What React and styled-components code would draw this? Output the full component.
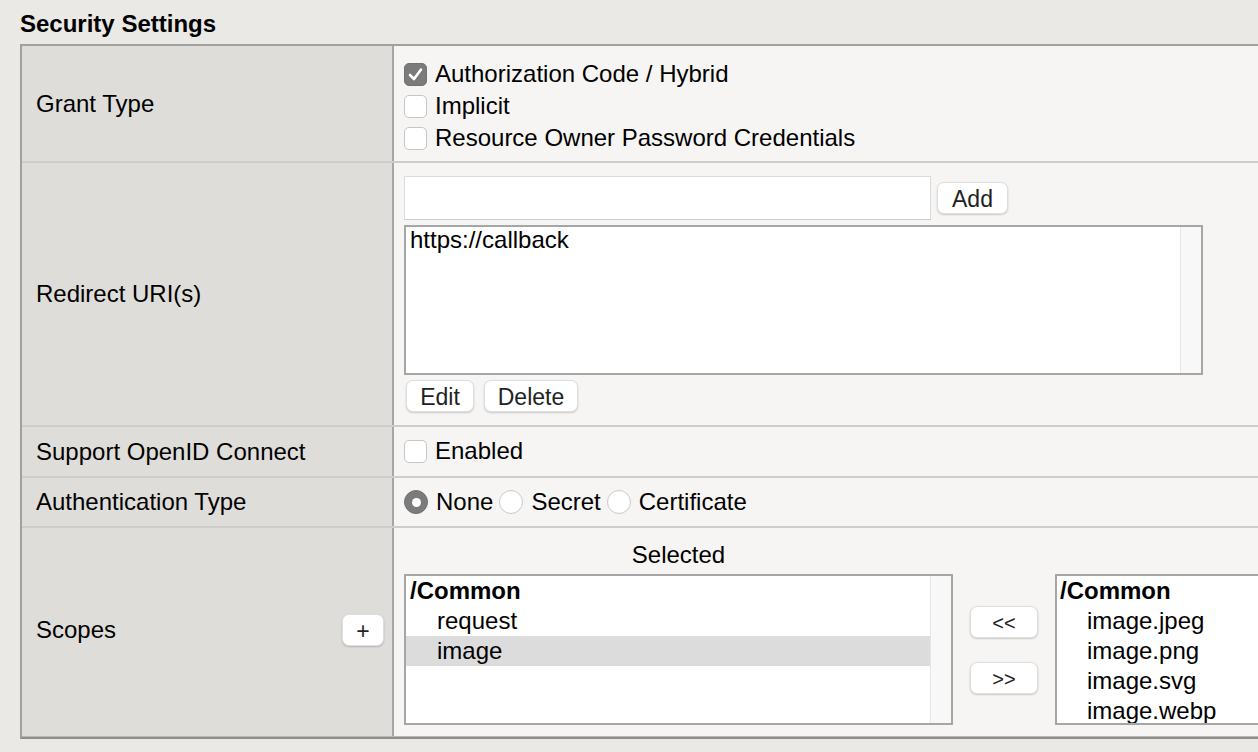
import React from "react"
import styled, { createGlobalStyle } from "styled-components"

const GlobalStyle = createGlobalStyle`
  *, *::before, *::after { box-sizing: border-box; }
  html, body {
    margin: 0;
    padding: 0;
    overflow: hidden;
    background: #ebe9e5;
  }
  body {
    font-family: "Liberation Sans", Arial, Helvetica, sans-serif;
    color: #000;
  }
`

const Check = ({ checked }) => (
  <CheckBox $checked={checked}>
    {checked && (
      <svg width="17" height="17" viewBox="0 0 17 17">
        <polyline points="3,9 7,13 14,3.5" fill="none" stroke="#fff" strokeWidth="2.6" strokeLinecap="round" strokeLinejoin="round" />
      </svg>
    )}
  </CheckBox>
)

const Option = ({ checked, children }) => (
  <OptionLine>
    <Check checked={checked} />
    <span>{children}</span>
  </OptionLine>
)

const Radio = ({ selected, children }) => (
  <RadioOption>
    <RadioDot $selected={selected} />
    <span>{children}</span>
  </RadioOption>
)

export default function App() {
  return (
    <Page>
      <GlobalStyle />
      <Title>Security Settings</Title>
      <Table>
        <Row>
          <Label>Grant Type</Label>
          <Value $pad="12px 10px 7px">
            <Option checked>Authorization Code / Hybrid</Option>
            <Option>Implicit</Option>
            <Option>Resource Owner Password Credentials</Option>
          </Value>
        </Row>

        <Row>
          <Label>Redirect URI(s)</Label>
          <Value $pad="13px 10px 13px">
            <InputRow>
              <TextInput />
              <Button $w={71}>Add</Button>
            </InputRow>
            <ListBox $w={799} $h={150} $mt={5}>
              <ListInner>
                <UriText>https://callback</UriText>
              </ListInner>
              <ScrollTrack />
            </ListBox>
            <ButtonRow>
              <Button $w={68}>Edit</Button>
              <Button $w={94}>Delete</Button>
            </ButtonRow>
          </Value>
        </Row>

        <Row>
          <Label>Support OpenID Connect</Label>
          <Value $pad="8px 10px 9px">
            <Option>Enabled</Option>
          </Value>
        </Row>

        <Row>
          <Label>Authentication Type</Label>
          <Value $pad="8px 10px 8px">
            <RadioLine>
              <Radio selected>None</Radio>
              <Radio>Secret</Radio>
              <Radio>Certificate</Radio>
            </RadioLine>
          </Value>
        </Row>

        <Row $last>
          <Label $lift={4}>
            <span>Scopes</span>
            <Button $w={42}>+</Button>
          </Label>
          <Value $pad="12px 10px 11px">
            <ScopeGrid>
              <ScopeHeader>Selected</ScopeHeader>
              <div />
              <div />
              <ListBox $w={549} $h={151}>
                <ListInner>
                  <Item $bold>/Common</Item>
                  <Item $indent>request</Item>
                  <Item $indent $selected>image</Item>
                </ListInner>
                <ScrollTrack />
              </ListBox>
              <ArrowColumn>
                <Button $w={68} $small>&lt;&lt;</Button>
                <Button $w={68} $small>&gt;&gt;</Button>
              </ArrowColumn>
              <ListBox $w={260} $h={151}>
                <ListInner>
                  <Item $bold $tight>/Common</Item>
                  <Item $indent $tight>image.jpeg</Item>
                  <Item $indent $tight>image.png</Item>
                  <Item $indent $tight>image.svg</Item>
                  <Item $indent $tight>image.webp</Item>
                </ListInner>
              </ListBox>
            </ScopeGrid>
          </Value>
        </Row>
      </Table>
    </Page>
  )
}

const Page = styled.div`
  width: 100%;
  overflow: hidden;
  padding: 10px 0 0 20px;
`

const Title = styled.h2`
  margin: 0 0 6px 0;
  font-size: 24px;
  font-weight: bold;
  line-height: 28px;
`

const Table = styled.div`
  width: 1320px;
  border-top: 2px solid #a0a0a0;
  border-left: 2px solid #a0a0a0;
  border-bottom: 2px solid #8e8e8e;
`

const Row = styled.div`
  display: flex;
  border-bottom: ${p => (p.$last ? "1px solid #b9b7b4" : "2px solid #cfcdca")};
`

const Label = styled.div`
  flex: none;
  width: 372px;
  display: flex;
  align-items: center;
  justify-content: space-between;
  padding: 0 8px ${p => p.$lift || 0}px 14px;
  background: #dfddd9;
  border-right: 2px solid #a6a6a6;
  font-size: 24px;
`

const Value = styled.div`
  flex: 1;
  background: #f6f5f3;
  padding: ${p => p.$pad};
  font-size: 24px;
`

const OptionLine = styled.div`
  display: flex;
  align-items: center;
  gap: 8px;
  height: 32px;
`

const CheckBox = styled.span`
  flex: none;
  width: 23px;
  height: 23px;
  display: flex;
  align-items: center;
  justify-content: center;
  border-radius: 5px;
  border: 1px solid ${p => (p.$checked ? "#717171" : "#c6c6c6")};
  background: ${p => (p.$checked ? "#7b7b7b" : "#fff")};
`

const RadioLine = styled.div`
  display: flex;
  align-items: center;
  height: 32px;
`

const RadioOption = styled.div`
  display: flex;
  align-items: center;
  gap: 8px;
  margin-right: 6px;
`

const RadioDot = styled.span`
  flex: none;
  width: 24px;
  height: 24px;
  border-radius: 50%;
  position: relative;
  border: 1px solid ${p => (p.$selected ? "#727272" : "#c9c9c9")};
  background: ${p => (p.$selected ? "#7b7b7b" : "#fff")};
  &::after {
    content: "";
    display: ${p => (p.$selected ? "block" : "none")};
    position: absolute;
    left: 50%;
    top: 50%;
    width: 9px;
    height: 9px;
    margin: -4.5px 0 0 -4.5px;
    border-radius: 50%;
    background: #fff;
  }
`

const InputRow = styled.div`
  display: flex;
  align-items: center;
  gap: 6px;
`

const TextInput = styled.div`
  width: 527px;
  height: 44px;
  background: #fff;
  border: 1px solid #dcdcdc;
  border-bottom-color: #cdcdcd;
`

const Button = styled.button`
  width: ${p => p.$w}px;
  height: 32px;
  padding: ${p => (p.$small ? "3px 0 0" : "2px 0 0")};
  background: #fff;
  color: #222;
  border: 1px solid #dedede;
  border-radius: 7px;
  box-shadow: 0 1px 2px rgba(0, 0, 0, 0.18);
  font-family: inherit;
  font-size: ${p => (p.$small ? "20px" : "23px")};
  line-height: 1;
`

const ButtonRow = styled.div`
  display: flex;
  gap: 10px;
  margin-top: 5px;
  padding-left: 2px;
`

const ListBox = styled.div`
  width: ${p => p.$w}px;
  height: ${p => p.$h}px;
  margin-top: ${p => p.$mt || 0}px;
  display: flex;
  background: #fff;
  border: 2px solid #a6a6a6;
  overflow: hidden;
`

const ListInner = styled.div`
  flex: 1;
  min-width: 0;
`

const ScrollTrack = styled.div`
  flex: none;
  width: 21px;
  background: #f8f8f8;
  border-left: 1px solid #e6e6e6;
`

const UriText = styled.div`
  padding: 0 4px;
  line-height: 26px;
`

const Item = styled.div`
  height: 30px;
  line-height: 30px;
  padding-left: ${p => (p.$indent ? (p.$tight ? 30 : 31) : (p.$tight ? 3 : 4))}px;
  font-weight: ${p => (p.$bold ? "bold" : "normal")};
  background: ${p => (p.$selected ? "#dcdcdc" : "transparent")};
  white-space: nowrap;
`

const ScopeGrid = styled.div`
  display: grid;
  grid-template-columns: 549px 102px 260px;
  grid-template-rows: 30px 151px;
  row-gap: 4px;
`

const ScopeHeader = styled.div`
  text-align: center;
  line-height: 30px;
`

const ArrowColumn = styled.div`
  display: flex;
  flex-direction: column;
  align-items: center;
  justify-content: center;
  gap: 24px;
`
